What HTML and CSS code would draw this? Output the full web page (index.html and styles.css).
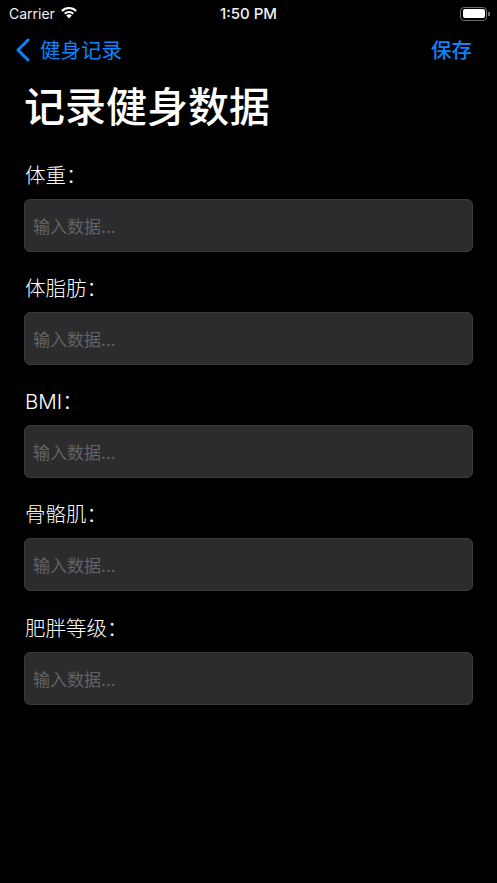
FILE: index.html
```html
<!DOCTYPE html>
<html lang="zh-CN">
<head>
    <meta charset="UTF-8">
    <title>记录健身数据</title>
    <link rel="stylesheet" href="styles.css">
</head>
<body>
    <div class="status-bar">
        <div class="status-left">
            <span>Carrier</span>
            <svg class="wifi" width="18" height="13" viewBox="0 0 18 13">
                <path d="M1.930 4.930a10 10 0 0 1 14.140 0" fill="none" stroke="#fff" stroke-width="2.200"/>
                <path d="M4.760 7.760a6 6 0 0 1 8.480 0" fill="none" stroke="#fff" stroke-width="2.200"/>
                <path d="M9 12.500 6.200 9.600a4 4 0 0 1 5.600 0z" fill="#fff"/>
            </svg>
        </div>
        <span class="status-time">1:50 PM</span>
        <div class="battery">
            <div class="battery-body"><div class="battery-fill"></div></div>
            <div class="battery-cap"></div>
        </div>
    </div>

    <nav class="nav-bar">
        <a class="nav-back">
            <svg width="16" height="24" viewBox="0 0 16 24">
                <path d="M13 2 3 12l10 10" fill="none" stroke="#0a84ff" stroke-width="3" stroke-linecap="round" stroke-linejoin="round"/>
            </svg>
            <span class="nav-label">健身记录</span>
        </a>
        <a class="nav-label nav-save">保存</a>
    </nav>

    <main class="content">
        <h1>记录健身数据</h1>
        <div class="field">
            <label>体重：</label>
            <div class="input">输入数据...</div>
        </div>
        <div class="field">
            <label>体脂肪：</label>
            <div class="input">输入数据...</div>
        </div>
        <div class="field">
            <label>BMI：</label>
            <div class="input">输入数据...</div>
        </div>
        <div class="field">
            <label>骨骼肌：</label>
            <div class="input">输入数据...</div>
        </div>
        <div class="field">
            <label>肥胖等级：</label>
            <div class="input">输入数据...</div>
        </div>
    </main>
</body>
</html>
```

FILE: styles.css
```css
* {
    box-sizing: border-box;
}
html, body {
    height: 100%;
}
body {
    margin: 0;
    background: #000;
    color: #fff;
    font-family: "Inter", "Noto Sans CJK SC", sans-serif;
    overflow: hidden;
}
.status-bar {
    height: 27px;
    padding: 0 7px 0 9px;
    display: flex;
    align-items: center;
    justify-content: space-between;
    font-size: 14px;
    color: #f2f2f2;
}
.status-left {
    display: flex;
    align-items: center;
    gap: 5px;
    width: 120px;
}
.wifi {
    margin-top: -3px;
}
.status-time {
    font-size: 15px;
    font-weight: 500;
}
.battery {
    width: 122px;
    display: flex;
    justify-content: flex-end;
    align-items: center;
}
.battery-body {
    width: 27px;
    height: 14px;
    border: 1px solid #6e6e6e;
    border-radius: 4px;
    padding: 1.500px;
}
.battery-fill {
    height: 100%;
    background: #fff;
    border-radius: 2px;
}
.battery-cap {
    width: 1.500px;
    height: 4px;
    margin-left: 1px;
    background: #6e6e6e;
}
.nav-bar {
    height: 46px;
    padding: 0 25px 0 15px;
    display: flex;
    align-items: center;
    justify-content: space-between;
    color: #0a84ff;
    font-size: 20.500px;
}
.nav-back {
    display: flex;
    align-items: center;
    gap: 9px;
}
.nav-label {
    padding-bottom: 2px;
}
.nav-save {
    font-weight: 500;
}
.content {
    padding: 0 24px;
}
h1 {
    margin: 0;
    height: 84.500px;
    font-size: 41px;
    line-height: 68px;
    font-weight: 500;
}
.field {
    margin-bottom: 19.250px;
}
.field label {
    display: block;
    height: 41px;
    padding: 3px 0 0 1px;
    font-size: 20.500px;
    font-weight: 300;
    line-height: 30px;
}
.input {
    height: 53px;
    padding: 0 8px;
    display: flex;
    align-items: center;
    background: #2c2c2e;
    border: 1px solid #3a3a3c;
    border-radius: 6px;
    font-size: 17px;
    color: #636366;
}
```
